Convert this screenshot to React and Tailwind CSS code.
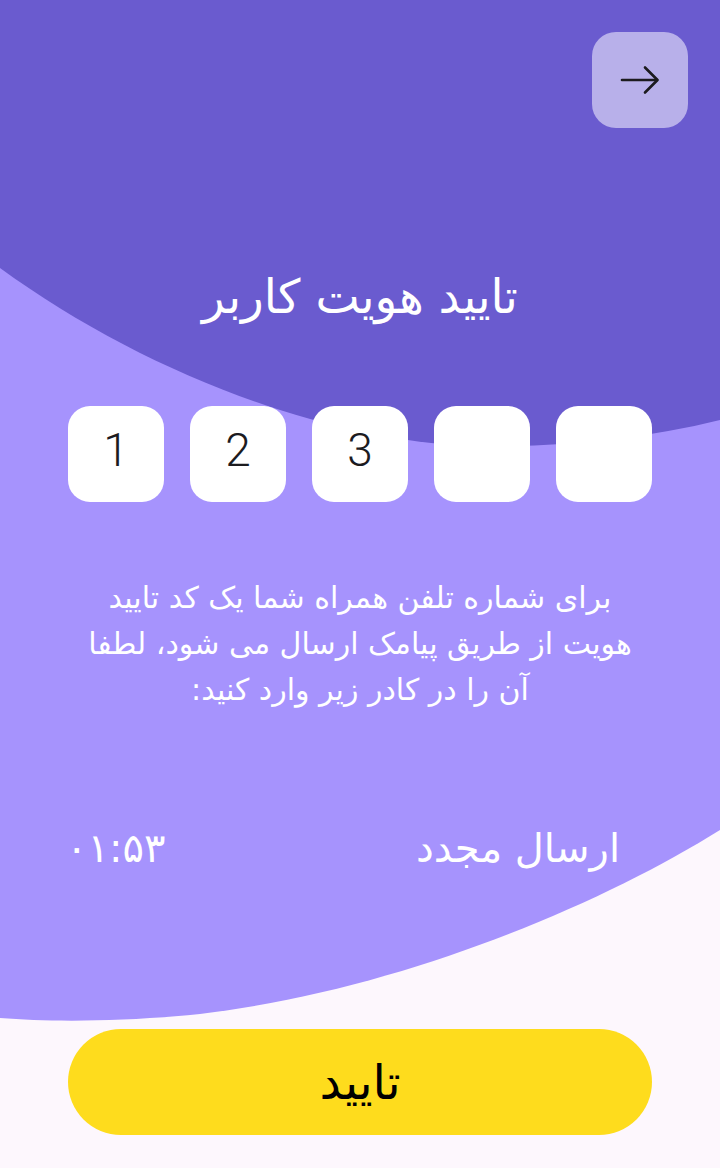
import React from "react";

const fa = { fontFamily: '"DejaVu Sans", "Noto Sans Arabic", sans-serif' };

export default function App() {
  const digits = ["1", "2", "3", "", ""];
  return (
    <div className="relative w-[720px] h-[1168px] overflow-hidden bg-[#fdf7fd]">
      <svg className="absolute inset-0 w-[720px] h-[1168px]" viewBox="0 0 720 1168" preserveAspectRatio="none">
        <path d="M0,0 H720 V830 C600,905 400,990 200,1014 C120,1022 50,1022 0,1018 Z" fill="#a693fd" />
        <path d="M0,0 H720 V420 C640,440 550,448 470,446 C320,440 140,370 0,268 Z" fill="#6a5bcf" />
      </svg>
      <div className="relative flex flex-col">
        <div className="flex justify-end pt-8 pr-8">
          <button className="w-24 h-24 rounded-[24px] bg-[#b8b0ea] flex items-center justify-center">
            <svg width="40" height="30" viewBox="0 0 40 30" fill="none" stroke="#1c1b1f" strokeWidth="2.6" strokeLinecap="round" strokeLinejoin="round">
              <path d="M2 15 H37" />
              <path d="M25 2.5 L37.5 15 L25 27.5" />
            </svg>
          </button>
        </div>
        <h1 dir="rtl" style={fa} className="mt-[139px] text-center text-white text-[47px] leading-[60px]">
          تایید هویت کاربر
        </h1>
        <div className="mt-[79px] flex justify-center gap-[26px]">
          {digits.map((d, i) => (
            <div
              key={i}
              className="w-24 h-24 rounded-[22px] bg-white flex items-center justify-center pb-[8px] text-[46px] font-light text-[#1c1b1f]"
              style={{ fontFamily: 'Roboto, "Liberation Sans", sans-serif' }}
            >
              {d}
            </div>
          ))}
        </div>
        <p dir="rtl" style={fa} className="mt-[73px] mx-auto w-[570px] text-center text-white text-[30px] leading-[46px]">
          برای شماره تلفن همراه شما یک کد تایید هویت از طریق پیامک ارسال می شود، لطفا آن را در کادر زیر وارد کنید:
        </p>
        <div className="mt-[110px] flex items-center justify-between pl-[66px] pr-[100px] h-[50px]">
          <span dir="ltr" style={fa} className="text-white text-[40px] leading-[50px]">۰۱:۵۳</span>
          <span dir="rtl" style={fa} className="text-white text-[40px] leading-[50px]">ارسال مجدد</span>
        </div>
        <div className="mt-[156px] px-[68px]">
          <button dir="rtl" style={fa} className="w-full h-[106px] rounded-full bg-[#fedc1d] text-black text-[48px]">
            تایید
          </button>
        </div>
      </div>
    </div>
  );
}
